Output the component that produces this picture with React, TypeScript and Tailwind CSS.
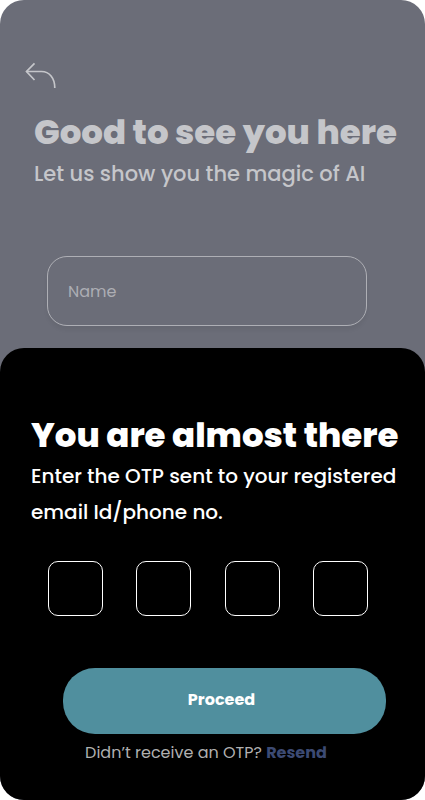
import React from "react";

const digits = ["First", "Second", "Third", "Fourth"];

function BackIcon() {
  return (
    <svg width="32" height="28" viewBox="0 0 32 28" fill="none" stroke="currentColor" strokeWidth="1.7" aria-hidden="true">
      <path d="M9.500 1.300 1.500 9.500l8 8.500" />
      <path d="M1.500 9.500H16.500c7.800 0 13.300 6.500 13.300 16.500" />
    </svg>
  );
}

export default function App() {
  return (
    <div className="bg-white font-[Poppins,Inter,sans-serif]">
      <main className="flex min-h-screen flex-col overflow-hidden rounded-3xl bg-[#6b6d78]">
        <header className="pt-[62px] pr-6 pl-[34px] text-[#c5c6ca]">
          <button type="button" aria-label="Go back" className="-ml-[9px] block">
            <BackIcon />
          </button>
          <h1 className="mt-5 text-[34px] leading-[44px] font-extrabold whitespace-nowrap">Good to see you here</h1>
          <p className="mt-1 text-[21px] leading-8 font-medium whitespace-nowrap">Let us show you the magic of AI</p>
        </header>

        <form className="mt-[66px] mr-[58px] mb-[22px] ml-[47px]">
          <input
            type="text"
            aria-label="Name"
            placeholder="Name"
            className="block h-[70px] w-full rounded-[20px] border border-[#aeafb5] bg-transparent px-5 text-base text-[#c5c6ca] shadow-[0_4px_4px_rgba(0,0,0,0.05)] outline-none placeholder:text-[#adaeb4]"
          />
        </form>

        <section aria-labelledby="otp-title" className="flex-1 rounded-t-3xl bg-black pt-[65px] pb-8 text-white">
          <h2 id="otp-title" className="pl-[31px] text-[34px] leading-[44px] font-extrabold whitespace-nowrap">
            You are almost there
          </h2>
          <p className="mt-px pr-6 pl-[31px] text-xl leading-9 font-medium">
            Enter the OTP sent to your registered email Id/phone no.
          </p>
          <form>
            <div className="mt-[31px] mr-[57px] ml-12 flex justify-between">
              {digits.map((name) => (
                <input
                  key={name}
                  type="text"
                  inputMode="numeric"
                  maxLength={1}
                  aria-label={`${name} digit`}
                  className="size-[55px] rounded-[10px] border border-white bg-transparent text-center text-xl outline-none"
                />
              ))}
            </div>
            <div className="mt-[52px] mr-[39px] ml-[63px]">
              <button type="submit" className="block h-[66px] w-full rounded-[32px] bg-[#508f9e] pr-[6px] pb-[2px] text-base font-bold">
                Proceed
              </button>
            </div>
          </form>
          <p className="mt-[7px] pr-[13px] text-center text-base text-[#b0b0b0]">
            Didn’t receive an OTP?{" "}
            <a href="#resend" className="font-bold text-[#3c4a73]">Resend</a>
          </p>
        </section>
      </main>
    </div>
  );
}
